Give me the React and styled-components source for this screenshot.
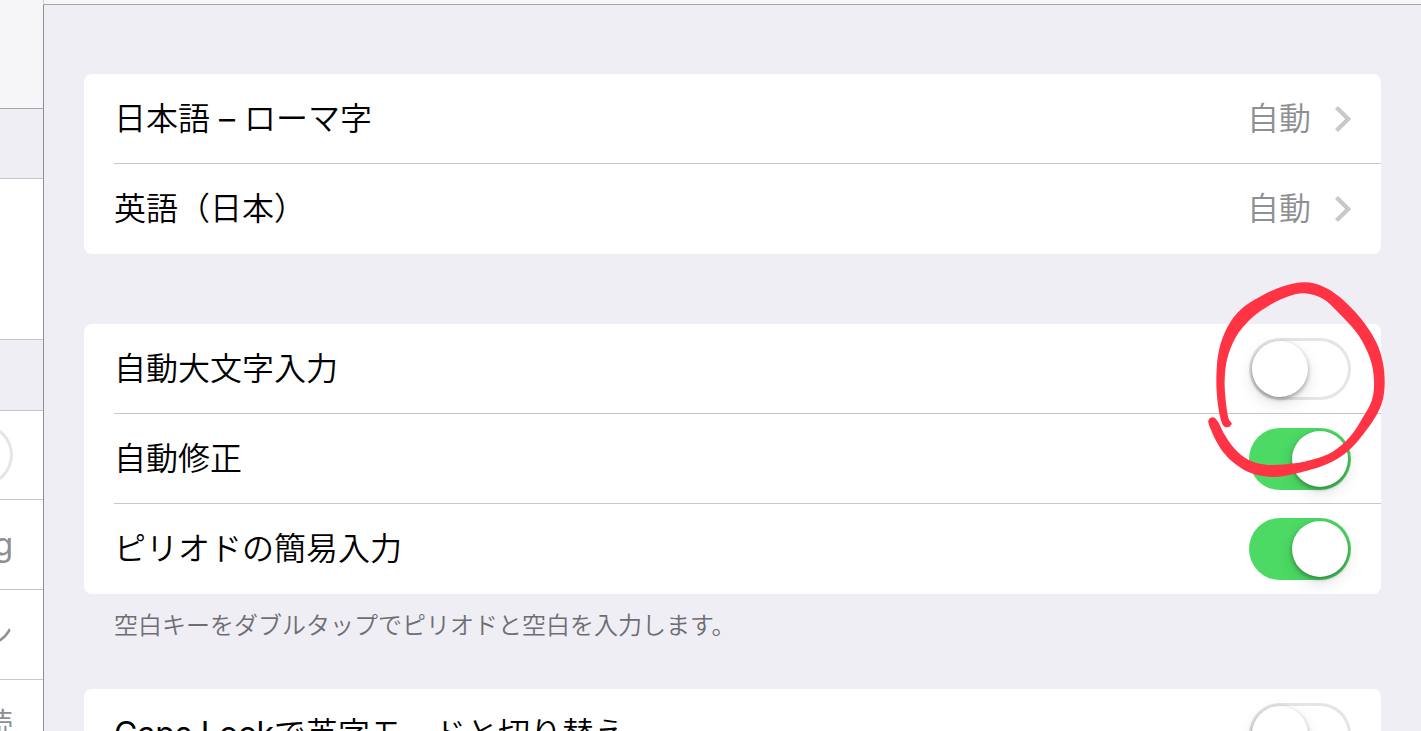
import React, { useState } from 'react';
import styled, { createGlobalStyle } from 'styled-components';

const GlobalStyle = createGlobalStyle`
* {
  box-sizing: border-box;
}

body {
  margin: 0;
  background: #efeef5;
  font-family: Inter, "Noto Sans CJK JP DemiLight", "Noto Sans CJK JP", sans-serif;
  font-weight: 400;
  color: #000;
}
`;

const Screen = styled.div`
  display: flex;
  height: 100vh;
  overflow: hidden;
`;

const Sidebar = styled.aside`
  flex: 0 0 43px;
  overflow: hidden;
`;

const SidebarHeader = styled.div`
  height: 109px;
  background: #f6f6f9;
  border-bottom: 1px solid #a5a5aa;
`;

const SidebarGap = styled.div`
  height: ${p => p.$height}px;
  border-bottom: 1px solid #c8c7cc;
`;

const SidebarRow = styled.div`
  display: flex;
  align-items: center;
  justify-content: flex-end;
  height: ${p => p.$height || 90}px;
  padding-right: 30px;
  background: #fff;
  border-bottom: 1px solid #c8c7cc;
  font-size: 32px;
  line-height: 48px;
  color: #8e8e93;
`;

const Main = styled.main`
  flex: 1;
  min-width: 0;
  display: flex;
  flex-direction: column;
`;

const NavBar = styled.header`
  flex: none;
  height: 5px;
  background: #f6f6f9;
  border-left: 1px solid #d2d2d6;
  border-bottom: 1px solid #a5a5aa;
`;

const Content = styled.div`
  flex: 1;
  padding: 69px 40px 0;
  border-left: 1px solid #8e8e93;
`;

const Group = styled.section`
  margin-bottom: ${p => p.$tight ? 0 : 70}px;
`;

const Card = styled.div`
  padding-left: 30px;
  background: #fff;
  border-radius: 8px;
`;

const Row = styled.div`
  display: flex;
  align-items: center;
  height: 90px;
  padding-right: 30px;
  border-bottom: 1px solid #c8c7cc;
  font-size: 32px;
  line-height: 48px;
  color: inherit;
  text-decoration: none;

  &:last-child {
    border-bottom-color: transparent;
  }
`;

const Label = styled.label`
  flex: 1;
`;

const Title = styled.span`
  flex: 1;
`;

const Value = styled.span`
  margin-right: 24px;
  color: #8e8e93;
`;

const Note = styled.p`
  margin: 0;
  padding: 14px 30px 45px;
  font-size: 24px;
  line-height: 36px;
  color: #6d6d72;
`;

const SwitchBox = styled.span`
  position: relative;
  display: flex;
`;

const Switch = styled.input.attrs({ type: 'checkbox', role: 'switch' })`
  appearance: none;
  display: flex;
  flex: none;
  width: 102px;
  height: 62px;
  margin: 0;
  padding: 3px;
  border-radius: 31px;
  background: #fff;
  box-shadow: inset 0 0 0 3px #e5e5e5;
  cursor: pointer;

  &::before {
    content: "";
    width: 56px;
    height: 56px;
    border-radius: 50%;
    background: #fff;
    box-shadow: 0 2px 4px rgba(0, 0, 0, 0.35), 0 6px 16px rgba(0, 0, 0, 0.12);
  }

  &:checked {
    justify-content: flex-end;
    background: #4cd964;
    box-shadow: none;
  }
`;

const Mark = styled.svg`
  position: absolute;
  top: -56px;
  right: -34px;
  z-index: 1;
  overflow: visible;
  pointer-events: none;
`;

const Chevron = () => (
  <svg width="16" height="26" viewBox="0 0 16 26" fill="none" aria-hidden="true">
    <path d="M1.5 1.5L13.2 13L1.5 24.5" stroke="#c7c7cc" strokeWidth="4.2" />
  </svg>
);

// outline of the marker stroke, clockwise along the outside and back inside
const markPoints = [
  [96, 460], [84, 405], [79, 330], [86, 245], [112, 172], [153, 118], [210, 80],
  [275, 50], [345, 37], [400, 50], [450, 82], [512, 145], [558, 215], [578, 275],
  [584, 335], [578, 390], [558, 438], [518, 495], [472, 545], [410, 583], [320, 610],
  [250, 621], [185, 610], [137, 583], [105, 553], [80, 516], [61, 475], [55, 452],
  [68, 442], [84, 455], [105, 496], [134, 536], [178, 571], [235, 585], [315, 580],
  [370, 568], [428, 545], [480, 500], [518, 443], [546, 390], [552, 330], [540, 265],
  [505, 195], [447, 130], [400, 87], [345, 70], [298, 78], [240, 105], [184, 145],
  [138, 200], [112, 265], [104, 330], [107, 390], [115, 443], [125, 461], [112, 472],
];

const smoothPath = pts => {
  const at = i => pts[(i + pts.length) % pts.length];
  const ctrl = (a, b, c) => `${a[0] + (c[0] - b[0]) / 6} ${a[1] + (c[1] - b[1]) / 6}`;
  const curves = pts.map((p, i) => {
    const next = at(i + 1);
    return `C${ctrl(p, at(i - 1), next)} ${ctrl(next, at(i + 2), p)} ${next[0]} ${next[1]}`;
  });
  return `M${pts[0][0]} ${pts[0][1]}${curves.join('')}Z`;
};

const RedCircle = () => (
  <Mark width="177" height="195" viewBox="54 36 531 585" aria-hidden="true">
    <path fill="#ff3344" d={smoothPath(markPoints)} />
  </Mark>
);

const languages = ['日本語 – ローマ字', '英語（日本）'];

const SwitchRow = ({ id, label, on, marked }) => {
  const [checked, setChecked] = useState(!!on);
  return (
    <Row>
      <Label htmlFor={id}>{label}</Label>
      <SwitchBox>
        <Switch id={id} checked={checked} onChange={e => setChecked(e.target.checked)} />
        {marked && <RedCircle />}
      </SwitchBox>
    </Row>
  );
};

export default () => (
  <Screen>
    <GlobalStyle />
    <Sidebar>
      <SidebarHeader />
      <SidebarGap $height={70} />
      <SidebarRow $height={161} />
      <SidebarGap $height={71} />
      <SidebarRow $height={89}>
        <Switch aria-label="機内モード" />
      </SidebarRow>
      <SidebarRow>g</SidebarRow>
      <SidebarRow>ン</SidebarRow>
      <SidebarRow>続</SidebarRow>
    </Sidebar>

    <Main>
      <NavBar />
      <Content>
        <Group>
          <Card>
            {languages.map(name => (
              <Row as="a" href="#" key={name}>
                <Title>{name}</Title>
                <Value>自動</Value>
                <Chevron />
              </Row>
            ))}
          </Card>
        </Group>

        <Group $tight>
          <Card>
            <SwitchRow id="auto-caps" label="自動大文字入力" marked />
            <SwitchRow id="auto-correct" label="自動修正" on />
            <SwitchRow id="period" label="ピリオドの簡易入力" on />
          </Card>
          <Note>空白キーをダブルタップでピリオドと空白を入力します。</Note>
        </Group>

        <Group>
          <Card>
            <SwitchRow id="caps-lock" label="Caps Lockで英字モードと切り替え" />
          </Card>
        </Group>
      </Content>
    </Main>
  </Screen>
);
